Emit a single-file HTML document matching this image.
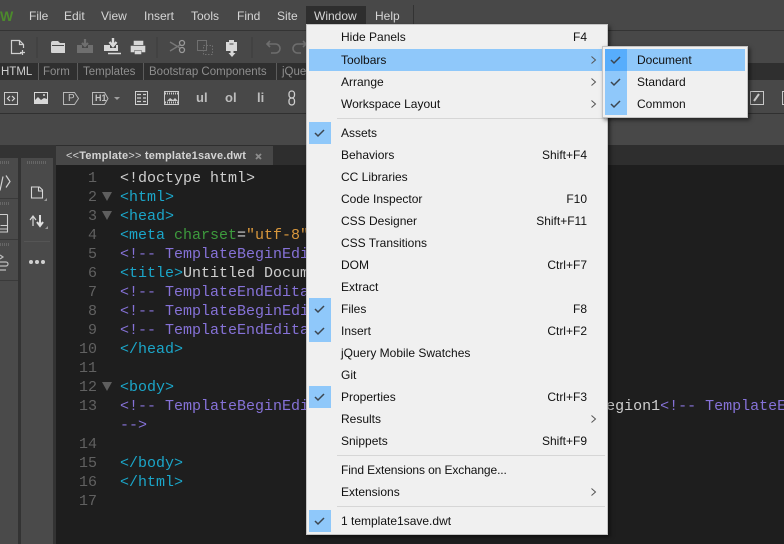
<!DOCTYPE html>
<html><head><meta charset="utf-8"><style>
html,body{margin:0;padding:0;width:784px;height:544px;overflow:hidden;background:#484848}
div,span,svg{position:absolute}
span.c,span.c span{position:static}
.b{white-space:pre}
.m{font:12px "Liberation Sans",sans-serif;color:#d6d6d6;top:9px;white-space:pre}
.t{font:11.5px "Liberation Sans",sans-serif;color:#8e8e8e;top:66px;white-space:pre}
.s{background:#5c5c5c;top:63px;width:1px;height:17px}
.l{font:15px/19px "Liberation Mono",monospace;left:120px;width:664px;overflow:hidden;white-space:pre;color:#cfcfcf}
.n{font:15px/19px "Liberation Mono",monospace;width:77px;left:20px;text-align:right;color:#616161;white-space:pre}
.a{color:#1ba6c9}.g{color:#3d9a3d}.o{color:#d8973c}.p{color:#8672d8}
.i{font:12px/22px "Liberation Sans",sans-serif;color:#111;left:341px;white-space:pre}
.k{font:12px/22px "Liberation Sans",sans-serif;color:#111;right:197px;white-space:pre}
.h{background:#8fc8fa;left:309px;width:22px;height:22px}
.f{left:337px;width:268px;height:1px;background:#d6d6d6}
.u{font:bold 13px "Liberation Sans",sans-serif;color:#bdbdbd;top:90px}
.q{background:#3a3a3a;height:1px}
.y{position:absolute;height:3px;background:repeating-linear-gradient(90deg,#666 0 1px,transparent 1px 2px)}
</style></head><body>

<!-- bars -->
<div style="left:0;top:30px;width:784px;height:1px;background:#343434"></div>
<div style="left:0;top:63px;width:784px;height:17px;background:#2f2f2f"></div>
<div style="left:0;top:113px;width:784px;height:1px;background:#303030"></div>
<div style="left:0;top:145px;width:784px;height:20px;background:#2e2e2e"></div>

<div class="m" style="left:0;top:8px;font:bold 14px 'Liberation Sans',sans-serif;color:#4c8a2c">W</div>
<div class="m" style="left:29px">File</div>
<div class="m" style="left:64px">Edit</div>
<div class="m" style="left:101px">View</div>
<div class="m" style="left:144px">Insert</div>
<div class="m" style="left:191px">Tools</div>
<div class="m" style="left:237px">Find</div>
<div class="m" style="left:277px">Site</div>
<div style="left:306px;top:6px;width:60px;height:18px;background:#2e2e2e"></div>
<div class="m" style="left:314px">Window</div>
<div class="m" style="left:375px">Help</div>
<div style="left:413px;top:5px;width:1px;height:20px;background:#333"></div>

<!-- standard toolbar -->
<svg style="left:0;top:31px" width="310" height="32" viewBox="0 31 310 32" fill="none">
<path d="M37 37v21M157 37v21M252 37v21" stroke="#3c3c3c"/>
<path d="M21.5 53.5H11.5V40.5H19.5L23.5 44.5V48M19.5 40.5V44.5H23.5" stroke="#cfcfcf" stroke-width="1.2"/><path d="M20 52.5h5M22.5 50v5" stroke="#cfcfcf" stroke-width="1.2"/>
<path d="M51 43q0-2 2-2h5l2 2h5v10q0 0-1 0H52q-1 0-1-1z" fill="#d4d4d4"/><path d="M52 45.5h12" stroke="#484848"/>
<path d="M77 45h5v3h6v-3h5v8H77z" fill="#6f6f6f"/><path d="M85 39v6M82 43l3 3 3-3" stroke="#6f6f6f" stroke-width="2.2"/>
<path d="M104 45h6v3h6v-3h2v6H104z" fill="#d8d8d8"/><path d="M113 38v6M109.500 42l3.500 4 3.500-4" stroke="#d8d8d8" stroke-width="2.4"/><path d="M108 53.500h13" stroke="#d8d8d8" stroke-width="1.5"/>
<path d="M134 45v-4h9v4M131 46h14v6h-3v-2h-8v2h-3zM135 51h6v3h-6z" fill="#d8d8d8" stroke="#d8d8d8" stroke-width=".6"/>
<path d="M170 42l10 6M170 51l10-6" stroke="#787878" stroke-width="1.4"/><circle cx="182" cy="43" r="2.500" stroke="#9a9a9a" stroke-width="1.300"/><circle cx="182" cy="50" r="2.500" stroke="#9a9a9a" stroke-width="1.300"/>
<rect x="197.500" y="40.500" width="9" height="10" stroke="#707070"/><rect x="203.500" y="45.500" width="9" height="9" stroke="#707070" stroke-dasharray="1.500 1.500"/>
<path d="M226 42h3v-2h5v2h3v9h-3.500v2h2l-3.500 4-3.500-4h2v-2H226z" fill="#d8d8d8"/><path d="M229.500 44h4" stroke="#484848"/>
<path d="M270 41l-3 3 3 3M267.500 44h8a3.500 3.500 0 0 1 0 9H271" stroke="#6e6e6e" stroke-width="1.600"/>
<path d="M303 41l3 3-3 3M305.500 44h-8a3.500 3.500 0 0 0 0 9H301" stroke="#6e6e6e" stroke-width="1.600"/>
</svg>

<!-- tabs -->
<div class="t" style="left:1px;color:#cfcfcf">HTML</div>
<div class="s" style="left:38px"></div><div class="t" style="left:43px">Form</div>
<div class="s" style="left:77px"></div><div class="t" style="left:83px">Templates</div>
<div class="s" style="left:143px"></div><div class="t" style="left:149px">Bootstrap Components</div>
<div class="s" style="left:276px"></div><div class="t" style="left:282px">jQue</div>

<!-- insert toolbar -->
<svg style="left:0;top:84px" width="784" height="26" viewBox="0 84 784 26" fill="none">
<rect x="4.500" y="92.500" width="13" height="12" stroke="#c8c8c8"/><path d="M10 96l-2.500 2.500L10 101M12 96l2.500 2.500L12 101" stroke="#d8d8d8" stroke-width="1.200"/>
<path d="M34 92h14v12H34z" fill="#d8d8d8"/><path d="M35 93h12v6l-3-1-3 2-3-3-3 3z" fill="#484848"/><circle cx="44" cy="95" r="1" fill="#d8d8d8"/>
<path d="M63.500 92.500h11l4 6-4 6h-11z" stroke="#b8b8b8"/>
<path d="M92.500 92.500h12l3.500 6-3.500 6h-12z" stroke="#b8b8b8"/>
<path d="M114 97h6l-3 3z" fill="#a0a0a0"/>
<rect x="135.500" y="91.500" width="12" height="13" stroke="#d0d0d0"/><path d="M137 94.500h4M143 94.500h3M137 98h4M143 98h3M137 101.500h4M143 101.500h3" stroke="#d0d0d0" stroke-width="1.300"/>
<rect x="164.500" y="91.500" width="14" height="13" stroke="#c8c8c8"/><path d="M165 93.500h14M165 102.500h14" stroke="#c8c8c8" stroke-dasharray="1 1" stroke-width="2"/><path d="M167 101l3-3 3 2 2-2 3 3z" fill="#c8c8c8"/>
<rect x="289" y="91" width="5.500" height="7" rx="2.700" stroke="#cfcfcf" stroke-width="1.300"/><rect x="289" y="98" width="5.500" height="7" rx="2.700" stroke="#cfcfcf" stroke-width="1.300"/>
<rect x="750.500" y="91.500" width="13" height="13" stroke="#c8c8c8"/><path d="M754 101l5-7" stroke="#c8c8c8" stroke-width="2"/>
<rect x="782.500" y="91.500" width="6" height="13" stroke="#c8c8c8"/>
</svg>
<div style="left:68px;top:93px;font:10px 'Liberation Sans',sans-serif;color:#c4c4c4">P</div>
<div style="left:95px;top:93px;font:bold 9px 'Liberation Sans',sans-serif;color:#c4c4c4">H1</div>
<div class="u" style="left:196px">ul</div>
<div class="u" style="left:225px">ol</div>
<div class="u" style="left:257px">li</div>

<!-- left panels -->
<div style="left:0;top:145px;width:56px;height:399px;background:#333"></div>
<div style="left:0;top:158px;width:18px;height:386px;background:#4a4a4a"></div>
<div style="left:21px;top:158px;width:32px;height:386px;background:#4a4a4a"></div>
<div class="q" style="left:0;top:198px;width:18px"></div>
<div class="q" style="left:0;top:239px;width:18px"></div>
<div class="q" style="left:0;top:280px;width:18px"></div>
<div style="left:24px;top:241px;width:26px;height:1px;background:#555"></div>
<div class="y" style="left:0;top:161px;width:10px"></div>
<div class="y" style="left:0;top:202px;width:10px"></div>
<div class="y" style="left:0;top:243px;width:10px"></div>
<div class="y" style="left:27px;top:161px;width:20px"></div>
<svg style="left:0;top:160px" width="56" height="120" viewBox="0 160 56 120" fill="none">
<path d="M0 191l3-14M6 176l4 6-4 6" transform="translate(0 -.500)" stroke="#d0d0d0" stroke-width="1.200"/>
<path d="M7.500 214.500H0M7.500 214.500V232H0M.5 225.500h7M0 229h7" stroke="#cfcfcf" stroke-width="1.100"/>
<path d="M0 255l3 2-3 2M0 262h6a2 2 0 0 1 0 4H0M0 270h6" stroke="#bcbcbc" stroke-width="1.200"/>
<path d="M31.500 198.500V187.500H39.500L42.500 190.500V198.500zM38.500 187.500V191.500H42.500" stroke="#d8d8d8" stroke-width="1.100" transform="translate(0 -.5)"/>
<path d="M47 201h-3l3-3z" fill="#999"/>
<path d="M33 226v-9M30 220l3-4 3 4" stroke="#d8d8d8" stroke-width="1.200"/><path d="M40 215v10M37 222l3 4 3-4" stroke="#e0e0e0" stroke-width="2"/>
<path d="M48 229h-3l3-3z" fill="#999"/>
<circle cx="31" cy="262" r="2" fill="#d0d0d0"/><circle cx="37" cy="262" r="2" fill="#d0d0d0"/><circle cx="43" cy="262" r="2" fill="#d0d0d0"/>
</svg>

<!-- document tab & editor -->
<div style="left:56px;top:146px;width:217px;height:19px;background:#474747"></div>
<div style="left:66px;top:150px;font:bold 11px 'Liberation Sans',sans-serif;color:#d4d4d4;white-space:pre;letter-spacing:.2px"><span class="c" style="font-weight:normal">&lt;&lt;</span>Template<span class="c" style="font-weight:normal">&gt;&gt;</span> template1save.dwt</div>
<svg style="left:255px;top:153px" width="8" height="8" fill="none"><path d="M1 1l5 5M6 1L1 6" stroke="#8c8c8c" stroke-width="1.800"/></svg>
<div style="left:56px;top:165px;width:728px;height:379px;background:#1e1e1e"></div>

<div class="n" style="top:169px">1</div>
<div class="n" style="top:188px">2</div>
<div class="n" style="top:207px">3</div>
<div class="n" style="top:226px">4</div>
<div class="n" style="top:245px">5</div>
<div class="n" style="top:264px">6</div>
<div class="n" style="top:283px">7</div>
<div class="n" style="top:302px">8</div>
<div class="n" style="top:321px">9</div>
<div class="n" style="top:340px">10</div>
<div class="n" style="top:359px">11</div>
<div class="n" style="top:378px">12</div>
<div class="n" style="top:397px">13</div>
<div class="n" style="top:435px">14</div>
<div class="n" style="top:454px">15</div>
<div class="n" style="top:473px">16</div>
<div class="n" style="top:492px">17</div>
<svg style="left:100px;top:190px" width="14" height="210" fill="#5e5e5e"><path d="M2 2h10l-5 9zM2 21h10l-5 9zM2 192h10l-5 9z"/></svg>

<div class="l" style="top:169px">&lt;!doctype html&gt;</div>
<div class="l a" style="top:188px">&lt;html&gt;</div>
<div class="l a" style="top:207px">&lt;head&gt;</div>
<div class="l" style="top:226px"><span class="c a">&lt;meta </span><span class="c g">charset</span>=<span class="c o">"utf-8"</span><span class="c a">&gt;</span></div>
<div class="l p" style="top:245px">&lt;!-- TemplateBeginEditable name="doctitle" --&gt;</div>
<div class="l" style="top:264px"><span class="c a">&lt;title&gt;</span>Untitled Document<span class="c a">&lt;/title&gt;</span></div>
<div class="l p" style="top:283px">&lt;!-- TemplateEndEditable --&gt;</div>
<div class="l p" style="top:302px">&lt;!-- TemplateBeginEditable name="head" --&gt;</div>
<div class="l p" style="top:321px">&lt;!-- TemplateEndEditable --&gt;</div>
<div class="l a" style="top:340px">&lt;/head&gt;</div>
<div class="l a" style="top:378px">&lt;body&gt;</div>
<div class="l" style="top:397px"><span class="c p">&lt;!-- TemplateBeginEditable name="EditRegion1" --&gt;</span>EditRegion1<span class="c p">&lt;!-- TemplateEndEditable</span></div>
<div class="l p" style="top:416px">--&gt;</div>
<div class="l a" style="top:454px">&lt;/body&gt;</div>
<div class="l a" style="top:473px">&lt;/html&gt;</div>

<!-- main menu -->
<div style="left:306px;top:24px;width:300px;height:509px;background:#f0f0f0;border:1px solid #c4c4c4;box-shadow:2px 2px 4px rgba(0,0,0,.55)"></div>
<div style="left:309px;top:49px;width:293px;height:22px;background:#8fc8fa"></div>
<div class="h" style="top:122px"></div>
<div class="h" style="top:298px"></div>
<div class="h" style="top:320px"></div>
<div class="h" style="top:386px"></div>
<div class="h" style="top:510px"></div>
<div class="f" style="top:118px"></div>
<div class="f" style="top:455px"></div>
<div class="f" style="top:506px"></div>

<div class="i" style="top:26px">Hide Panels</div><div class="k" style="top:26px">F4</div>
<div class="i" style="top:49px">Toolbars</div>
<div class="i" style="top:71px">Arrange</div>
<div class="i" style="top:93px">Workspace Layout</div>
<div class="i" style="top:122px">Assets</div>
<div class="i" style="top:144px">Behaviors</div><div class="k" style="top:144px">Shift+F4</div>
<div class="i" style="top:166px">CC Libraries</div>
<div class="i" style="top:188px">Code Inspector</div><div class="k" style="top:188px">F10</div>
<div class="i" style="top:210px">CSS Designer</div><div class="k" style="top:210px">Shift+F11</div>
<div class="i" style="top:232px">CSS Transitions</div>
<div class="i" style="top:254px">DOM</div><div class="k" style="top:254px">Ctrl+F7</div>
<div class="i" style="top:276px">Extract</div>
<div class="i" style="top:298px">Files</div><div class="k" style="top:298px">F8</div>
<div class="i" style="top:320px">Insert</div><div class="k" style="top:320px">Ctrl+F2</div>
<div class="i" style="top:342px">jQuery Mobile Swatches</div>
<div class="i" style="top:364px">Git</div>
<div class="i" style="top:386px">Properties</div><div class="k" style="top:386px">Ctrl+F3</div>
<div class="i" style="top:408px">Results</div>
<div class="i" style="top:430px">Snippets</div><div class="k" style="top:430px">Shift+F9</div>
<div class="i" style="top:459px;letter-spacing:-.1px">Find Extensions on Exchange...</div>
<div class="i" style="top:481px">Extensions</div>
<div class="i" style="top:510px;">1 template1save.dwt</div>

<svg style="left:300px;top:0;" width="484" height="544" fill="none">
<g stroke="#555" stroke-width="1">
<path d="M291.500 56.500l4 3.500-4 3.500M291.500 78.500l4 3.500-4 3.500M291.500 100.500l4 3.500-4 3.500M291.500 415.500l4 3.500-4 3.500M291.500 488.500l4 3.500-4 3.500"/>
</g>
</svg>

<!-- submenu -->
<div style="left:602px;top:46px;width:144px;height:70px;background:#f0f0f0;border:1px solid #c4c4c4;box-shadow:2px 2px 4px rgba(0,0,0,.55)"></div>
<div style="left:605px;top:49px;width:140px;height:22px;background:#8fc8fa"></div>
<div style="left:605px;top:49px;width:22px;height:22px;background:#57adfc"></div>
<div style="left:605px;top:71px;width:22px;height:44px;background:#8fc8fa"></div>
<div class="i" style="left:637px;top:49px">Document</div>
<div class="i" style="left:637px;top:71px">Standard</div>
<div class="i" style="left:637px;top:93px">Common</div>

<svg style="left:0;top:0" width="784" height="544" fill="none">
<g stroke="#3c4650" stroke-width="1.500">
<path d="M315 133l3 3 6-6M315 309l3 3 6-6M315 331l3 3 6-6M315 397l3 3 6-6M315 521l3 3 6-6M611 60l3 3 6-6M611 82l3 3 6-6M611 104l3 3 6-6"/>
</g>
</svg>
</body></html>
